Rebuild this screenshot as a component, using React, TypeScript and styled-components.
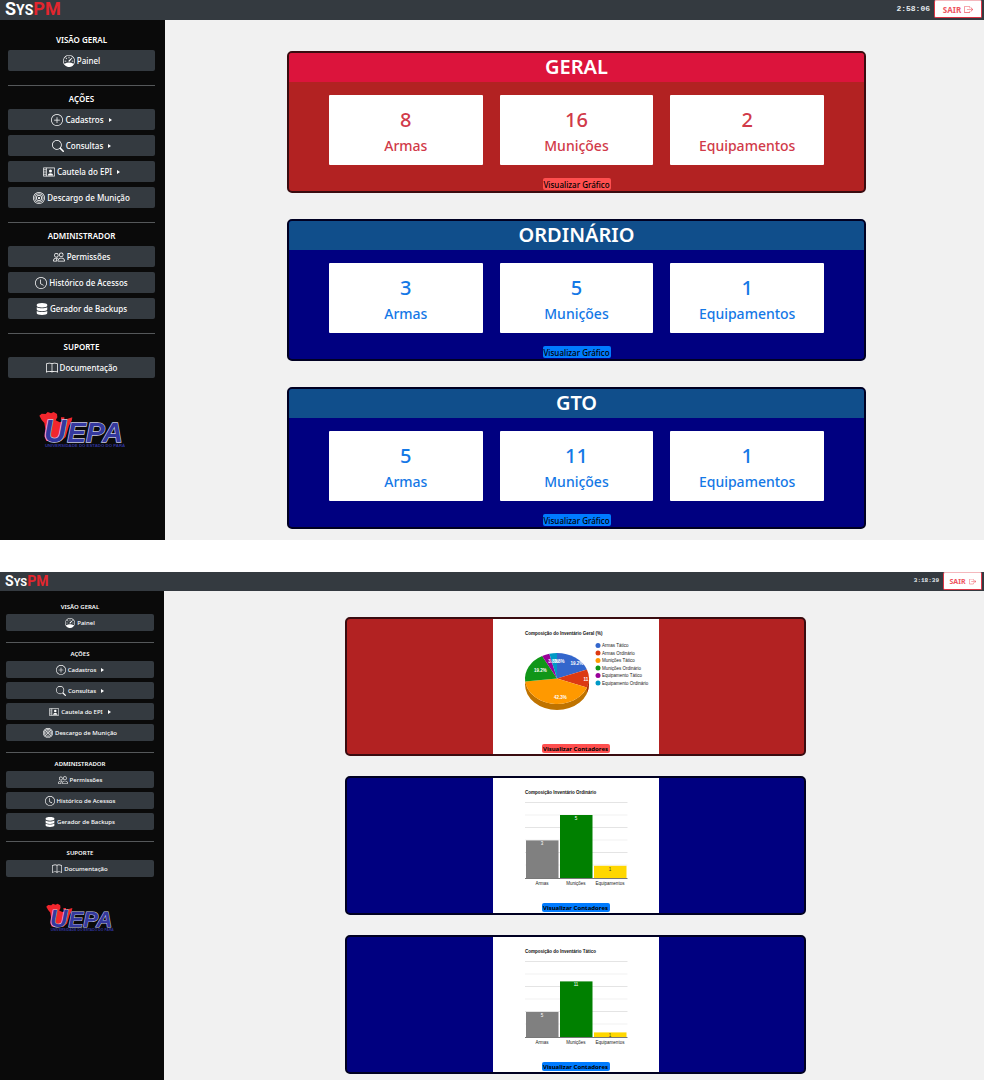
import React from 'react';
import styled, { createGlobalStyle, ThemeProvider } from 'styled-components';
import {
  BsSpeedometer,
  BsPlusCircle,
  BsSearch,
  BsBullseye,
  BsPeople,
  BsClock,
  BsBook,
  BsBoxArrowRight,
} from 'react-icons/bs';
import { FaDatabase } from 'react-icons/fa';

const GlobalStyle = createGlobalStyle`
  *, *::before, *::after { box-sizing: border-box; }
  body {
    margin: 0;
    background: #ffffff;
    font-family: 'Noto Sans', 'Open Sans', sans-serif;
  }
  h1, h2, p, ul { margin: 0; padding: 0; }
  button { font-family: inherit; cursor: pointer; }
`;

const large = {
  header: 20, brand: 18, brandSmall: 14, brandLine: 18, clock: 8, exit: 8, exitWidth: 48, exitLine: 18,
  side: 165, sidePad: '7px 10px 0 8px', title: 8, titleHeight: 23, titleTop: 2,
  item: 21, itemGap: 5, itemFont: 8, icon: 12, exitIcon: 9, rule: 14, logo: 86, logoTop: 33,
  mainPad: '31px 118px 11px 122px', gap: 26,
};

const small = {
  header: 19, brand: 14, brandSmall: 11, brandLine: 18, clock: 6, exit: 7, exitWidth: 39, exitLine: 18,
  side: 164, sidePad: '5px 10px 0 6px', title: 6, titleHeight: 18, titleTop: 3,
  item: 17, itemGap: 4, itemFont: 6, icon: 10, exitIcon: 7, rule: 11, logo: 68, logoTop: 26,
  mainPad: '26px 178px 7px 181px', gap: 20,
};

type Size = typeof large;
type ThemeProps = { theme: any };
const px = (key: keyof Size) => ({ theme }: ThemeProps) => `${theme[key]}px`;

const Page = styled.div`
  display: flex;
  flex-direction: column;
  gap: 32px;
`;

const Screen = styled.section`
  display: flex;
  flex-direction: column;
`;

const TopBar = styled.header`
  display: flex;
  align-items: flex-start;
  justify-content: space-between;
  height: ${px('header')};
  padding: 0 2px 0 5px;
  background: #343a40;
`;

const Brand = styled.a`
  font-family: Roboto, 'Liberation Sans', sans-serif;
  font-weight: 700;
  font-size: ${px('brand')};
  line-height: ${px('brandLine')};
  color: #ffffff;
  text-decoration: none;
  small { font-size: ${px('brandSmall')}; }
  span { color: #e3262e; }
`;

const Session = styled.div`
  display: flex;
  align-items: flex-start;
  gap: 4px;
`;

const Clock = styled.time`
  font-family: 'Liberation Mono', monospace;
  font-weight: 700;
  font-size: ${px('clock')};
  line-height: ${px('exitLine')};
  color: #e4eaee;
`;

const ExitButton = styled.button`
  display: flex;
  align-items: center;
  justify-content: center;
  gap: 3px;
  width: ${px('exitWidth')};
  height: ${px('exitLine')};
  padding: 0;
  border: 1px solid #dc3545;
  border-top-color: #f4b8bd;
  border-radius: 2px;
  background: #ffffff;
  color: #ee5560;
  font-weight: 700;
  font-size: ${px('exit')};
  svg { width: ${px('exitIcon')}; height: ${px('exitIcon')}; }
`;

const Body = styled.div`
  display: flex;
  align-items: stretch;
`;

const Sidebar = styled.nav`
  flex: none;
  width: ${px('side')};
  padding: ${({ theme }: ThemeProps) => theme.sidePad};
  background: #0a0a0a;
`;

const Group = styled.div`
  &:not(:first-child) {
    margin-top: ${px('rule')};
    border-top: 1px solid #55585a;
  }
`;

const GroupTitle = styled.h2`
  height: ${px('titleHeight')};
  padding-top: ${px('titleTop')};
  line-height: ${px('item')};
  font-size: ${px('title')};
  font-weight: 600;
  text-align: center;
  color: #ffffff;
`;

const Items = styled.ul`
  display: flex;
  flex-direction: column;
  gap: ${px('itemGap')};
  list-style: none;
`;

const NavButton = styled.button`
  display: flex;
  align-items: center;
  justify-content: center;
  gap: 2px;
  width: 100%;
  height: ${px('item')};
  padding: 0;
  border: 0;
  border-radius: 2px;
  background: #343a40;
  color: #ffffff;
  font-size: ${px('itemFont')};
  font-weight: 500;
  svg { width: ${px('icon')}; height: ${px('icon')}; }
`;

const Caret = styled.i`
  margin-left: 3px;
  border: 2px solid transparent;
  border-left: 3px solid #ffffff;
  border-right: 0;
`;

const LogoSlot = styled.div`
  width: ${px('logo')};
  margin: ${px('logoTop')} auto 0;
  svg { display: block; width: 100%; }
`;

const Main = styled.main`
  flex: 1;
  display: flex;
  flex-direction: column;
  gap: ${px('gap')};
  padding: ${({ theme }: ThemeProps) => theme.mainPad};
  background: #f1f1f1;
`;

type Tone = 'red' | 'blue';
const tones = {
  red: { body: '#b22222', head: '#dc143c', edge: '#3a0c10', text: '#d13a49', action: '#ff4f4f' },
  blue: { body: '#000080', head: '#104e8b', edge: '#000022', text: '#1478e6', action: '#007bff' },
};

const Card = styled.article<{ $tone: Tone }>`
  display: flex;
  flex-direction: column;
  align-items: center;
  border: 2px solid ${({ $tone }) => tones[$tone].edge};
  border-radius: 5px;
  background: ${({ $tone }) => tones[$tone].body};
  overflow: hidden;
`;

const CardTitle = styled.h2<{ $tone: Tone }>`
  width: 100%;
  height: 29px;
  line-height: 28px;
  background: ${({ $tone }) => tones[$tone].head};
  color: #ffffff;
  font-size: 20px;
  font-weight: 600;
  text-align: center;
`;

const Tiles = styled.div`
  display: grid;
  grid-template-columns: repeat(3, 1fr);
  gap: 17px;
  width: 100%;
  padding: 13px 40px;
`;

const Tile = styled.div<{ $tone: Tone }>`
  display: flex;
  flex-direction: column;
  align-items: center;
  height: 70px;
  padding-top: 12px;
  border-radius: 1px;
  background: #ffffff;
  color: ${({ $tone }) => tones[$tone].text};
  font-weight: 500;
`;

const Count = styled.strong`
  font-size: 20px;
  line-height: 26px;
  font-weight: 500;
`;

const Label = styled.span`
  font-size: 14px;
  line-height: 26px;
`;

const ActionButton = styled.button<{ $tone: Tone; $chart?: boolean }>`
  display: flex;
  align-items: center;
  justify-content: center;
  width: 68px;
  height: ${({ $chart }) => ($chart ? 9 : 12)}px;
  margin-bottom: 1px;
  padding: 0;
  border: 0;
  border-radius: 2px;
  background: ${({ $tone }) => tones[$tone].action};
  color: #000000;
  font-size: ${({ $chart }) => ($chart ? 6 : 8)}px;
  font-weight: ${({ $chart }) => ($chart ? 700 : 500)};
  white-space: nowrap;
`;

const ChartPanel = styled.div`
  display: flex;
  flex-direction: column;
  align-items: center;
  width: 166px;
  background: #ffffff;
  svg { display: block; width: 166px; height: 125px; }
`;

const PersonCard = () => (
  <svg viewBox="0 0 16 16" fill="none" stroke="currentColor">
    <path d="M.5 2.5h15v11H.5zM4.5 2.5v11M.5 5h4M.5 8h4M.5 11h4" />
    <circle cx="10" cy="6.5" r="2" fill="currentColor" stroke="none" />
    <path d="M6.5 12.5c0-4 7-4 7 0z" fill="currentColor" stroke="none" />
  </svg>
);

const UepaLogo = () => (
  <svg viewBox="0 0 258 110" role="img" aria-label="UEPA">
    <path
      d="M1 14 8 8l12 1 6-6 10 4 8-4 10 6 1 10-5 9 12 6 14-4 6-7 8 3 10-4-4 12-6 10-10 34-14 12H22l-6-14 3-22-3-18-8-9z"
      fill="#f2262d"
    />
    <path d="M66 19h10v7H66zM84 24l16-5-3 10-13 3z" fill="#f2262d" />
    <g
      fontFamily="'Liberation Sans', sans-serif"
      fontWeight="700"
      fontStyle="italic"
      fill="#34389e"
      stroke="#c9cbe6"
      strokeWidth="4"
      paintOrder="stroke"
    >
      <text x="15" y="92" fontSize="92">U</text>
      <text x="85" y="92" fontSize="84">EPA</text>
    </g>
    <text x="18" y="107" fontFamily="'Liberation Sans', sans-serif" fontWeight="700" fontSize="13" fill="#30349a">
      UNIVERSIDADE DO ESTADO DO PARÁ
    </text>
  </svg>
);

type NavItem = { icon: React.ReactNode; text: string; menu?: boolean };
const navigation: { title: string; items: NavItem[] }[] = [
  { title: 'VISÃO GERAL', items: [{ icon: <BsSpeedometer />, text: 'Painel' }] },
  {
    title: 'AÇÕES',
    items: [
      { icon: <BsPlusCircle />, text: 'Cadastros', menu: true },
      { icon: <BsSearch />, text: 'Consultas', menu: true },
      { icon: <PersonCard />, text: 'Cautela do EPI', menu: true },
      { icon: <BsBullseye />, text: 'Descargo de Munição' },
    ],
  },
  {
    title: 'ADMINISTRADOR',
    items: [
      { icon: <BsPeople />, text: 'Permissões' },
      { icon: <BsClock />, text: 'Histórico de Acessos' },
      { icon: <FaDatabase />, text: 'Gerador de Backups' },
    ],
  },
  { title: 'SUPORTE', items: [{ icon: <BsBook />, text: 'Documentação' }] },
];

const Shell = ({ size, time, children }: { size: Size; time: string; children: React.ReactNode }) => (
  <ThemeProvider theme={size}>
    <Screen>
      <TopBar>
        <Brand href="#">S<small>YS</small><span>PM</span></Brand>
        <Session>
          <Clock>{time}</Clock>
          <ExitButton type="button">SAIR <BsBoxArrowRight /></ExitButton>
        </Session>
      </TopBar>
      <Body>
        <Sidebar>
          {navigation.map((group) => (
            <Group key={group.title}>
              <GroupTitle>{group.title}</GroupTitle>
              <Items>
                {group.items.map((item) => (
                  <li key={item.text}>
                    <NavButton type="button">
                      {item.icon}
                      {item.text}
                      {item.menu && <Caret />}
                    </NavButton>
                  </li>
                ))}
              </Items>
            </Group>
          ))}
          <LogoSlot><UepaLogo /></LogoSlot>
        </Sidebar>
        <Main>{children}</Main>
      </Body>
    </Screen>
  </ThemeProvider>
);

const counters: { title: string; tone: Tone; values: number[] }[] = [
  { title: 'GERAL', tone: 'red', values: [8, 16, 2] },
  { title: 'ORDINÁRIO', tone: 'blue', values: [3, 5, 1] },
  { title: 'GTO', tone: 'blue', values: [5, 11, 1] },
];
const kinds = ['Armas', 'Munições', 'Equipamentos'];

const slices = [
  { name: 'Armas Tático', value: 5, color: '#3366cc' },
  { name: 'Armas Ordinário', value: 3, color: '#dc3912' },
  { name: 'Munições Tático', value: 11, color: '#ff9900' },
  { name: 'Munições Ordinário', value: 5, color: '#109618' },
  { name: 'Equipamento Tático', value: 1, color: '#990099' },
  { name: 'Equipamento Ordinário', value: 1, color: '#0099c6' },
];

const chartFont = "'Liberation Sans', Arial, sans-serif";

const PieChart = () => {
  const cx = 128;
  const cy = 119;
  const rx = 64;
  const ry = 51;
  const total = slices.reduce((sum, s) => sum + s.value, 0);
  const point = (v: number) => {
    const a = (v / total) * Math.PI * 2;
    return `${cx + rx * Math.sin(a)} ${cy - ry * Math.cos(a)}`;
  };
  let start = 0;
  return (
    <svg viewBox="0 0 332 250" fontFamily={chartFont} fontSize="9">
      <text x="64" y="32" fontWeight="700" fill="#111111">Composição do Inventário Geral (%)</text>
      <path d="M64 119a64 51 0 0 0 128 0v12a64 51 0 0 1 -128 0z" fill="#bf7300" />
      <path d={`M${point(8)}A64 51 0 0 0 192 119v12A64 51 0 0 1 188 148z`} fill="#a52b0e" />
      {slices.map((s) => {
        const from = start;
        start += s.value;
        return (
          <path
            key={s.name}
            d={`M${cx} ${cy}L${point(from)}A${rx} ${ry} 0 0 1 ${point(start)}z`}
            fill={s.color}
          />
        );
      })}
      <g fill="#ffffff" textAnchor="middle" fontWeight="700">
        <text x="168" y="92">19.2%</text>
        <text x="186" y="123">11</text>
        <text x="135" y="160">42.3%</text>
        <text x="95" y="105">19.2%</text>
        <text x="121" y="88">3.8%</text>
        <text x="133" y="88">3.8%</text>
      </g>
      {slices.map((s, i) => (
        <g key={s.name}>
          <circle cx="210" cy={53 + i * 15} r="5" fill={s.color} />
          <text x="218" y={56 + i * 15} fill="#222222">{s.name}</text>
        </g>
      ))}
    </svg>
  );
};

type BarData = { title: string; values: number[]; unit: number };
const BarChart = ({ title, values, unit }: BarData) => {
  const colors = ['#808080', '#008000', '#ffd700'];
  return (
    <svg viewBox="0 0 332 250" fontFamily={chartFont} fontSize="9">
      <text x="64" y="31" fontWeight="700" fill="#111111">{title}</text>
      {[0, 1, 2, 3, 4, 5].map((i) => (
        <rect key={i} x="64" y={48 + i * 25} width="205" height="2" fill={i % 2 ? '#f2f2f2' : '#e4e4e4'} />
      ))}
      {values.map((v, i) => {
        const top = 201 - v * unit;
        const x = 66 + i * 68;
        return (
          <g key={kinds[i]} textAnchor="middle">
            <rect x={x} y={top} width="65" height={v * unit} fill={colors[i]} />
            <text x={x + 32} y={top + 10} fill={i === 2 ? '#333333' : '#ffffff'}>{v}</text>
            <text x={x + 32} y="214" fill="#222222">{kinds[i]}</text>
          </g>
        );
      })}
      <rect x="64" y="200" width="205" height="2" fill="#777777" />
    </svg>
  );
};

const charts: { tone: Tone; chart: React.ReactNode }[] = [
  { tone: 'red', chart: <PieChart /> },
  { tone: 'blue', chart: <BarChart title="Composição Inventário Ordinário" values={[3, 5, 1]} unit={25.4} /> },
  { tone: 'blue', chart: <BarChart title="Composição do Inventário Tático" values={[5, 11, 1]} unit={10.2} /> },
];

export default function App() {
  return (
    <Page>
      <GlobalStyle />
      <Shell size={large} time="2:58:06">
        {counters.map(({ title, tone, values }) => (
          <Card key={title} $tone={tone}>
            <CardTitle $tone={tone}>{title}</CardTitle>
            <Tiles>
              {values.map((value, i) => (
                <Tile key={kinds[i]} $tone={tone}>
                  <Count>{value}</Count>
                  <Label>{kinds[i]}</Label>
                </Tile>
              ))}
            </Tiles>
            <ActionButton type="button" $tone={tone}>Visualizar Gráfico</ActionButton>
          </Card>
        ))}
      </Shell>
      <Shell size={small} time="3:18:39">
        {charts.map(({ tone, chart }, i) => (
          <Card key={i} $tone={tone}>
            <ChartPanel>
              {chart}
              <ActionButton type="button" $tone={tone} $chart>Visualizar Contadores</ActionButton>
            </ChartPanel>
          </Card>
        ))}
      </Shell>
    </Page>
  );
}
